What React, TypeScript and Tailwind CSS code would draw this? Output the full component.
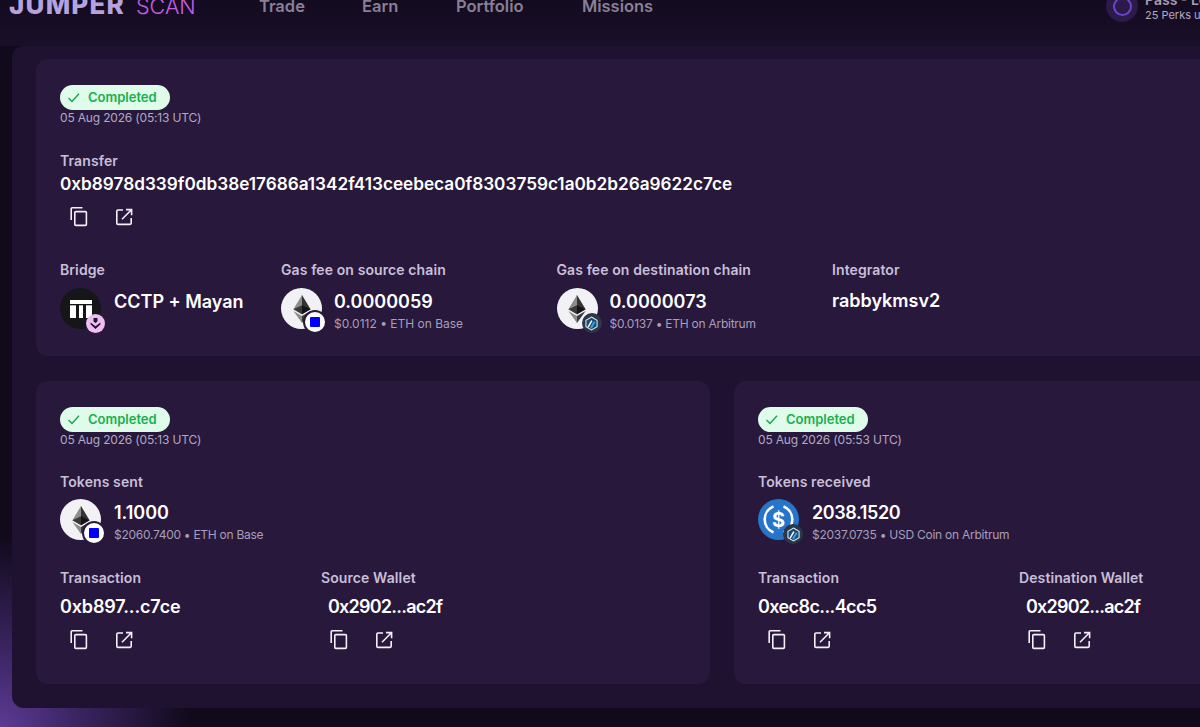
import React from 'react';

function CopyIcon() {
  return (
    <svg width="24" height="24" viewBox="0 0 24 24" fill="none" stroke="#f4f0f8" strokeWidth="1.6">
      <rect x="7.8" y="6.6" width="11.6" height="13.8" rx="1" />
      <path d="M15.5 2.8H5.2a1 1 0 0 0-1 1V15" />
    </svg>
  );
}

function OpenIcon() {
  return (
    <svg width="24" height="24" viewBox="0 0 24 24" fill="none" stroke="#f4f0f8" strokeWidth="1.6">
      <path d="M11 5H6a1.2 1.2 0 0 0-1.2 1.2v12A1.2 1.2 0 0 0 6 19.4h12a1.2 1.2 0 0 0 1.200-1.200V13" />
      <path d="M10 14.200 19.400 4.800M14 4.600h5.600v5.600" />
    </svg>
  );
}

function Actions() {
  return (
    <div className="flex gap-[21px] pl-[7px]">
      <button className="block w-6 h-6"><CopyIcon /></button>
      <button className="block w-6 h-6"><OpenIcon /></button>
    </div>
  );
}

function CheckBadge() {
  return (
    <div className="flex items-center w-[110px] h-[25px] rounded-full bg-[#dffbe9] pl-[7px] gap-[8px]">
      <svg width="13" height="13" viewBox="0 0 13 13" fill="none" stroke="#16a34a" strokeWidth="1.3">
        <path d="M1.500 7 5 10.500 12 2.800" />
      </svg>
      <span className="text-[13px] font-semibold text-[#17b04f] leading-none">Completed</span>
    </div>
  );
}

function EthLogo() {
  return (
    <div className="w-[41px] h-[41px] rounded-full bg-[#f2f2f6] flex items-center justify-center">
      <svg width="18" height="28" viewBox="0 0 256 417">
        <polygon fill="#343434" points="127.961,0 125.166,9.5 125.166,285.168 127.961,287.958 255.923,212.32" />
        <polygon fill="#8C8C8C" points="127.962,0 0,212.32 127.962,287.959 127.962,154.158" />
        <polygon fill="#3C3C3B" points="127.961,312.187 126.386,314.107 126.386,412.306 127.961,416.907 255.999,236.587" />
        <polygon fill="#8C8C8C" points="127.962,416.905 127.962,312.185 0,236.585" />
        <polygon fill="#141414" points="127.961,287.958 255.922,212.321 127.961,154.159" />
        <polygon fill="#393939" points="0,212.321 127.961,287.958 127.961,154.159" />
      </svg>
    </div>
  );
}

function UsdcLogo() {
  return (
    <svg width="41" height="41" viewBox="0 0 41 41">
      <circle cx="20.500" cy="20.500" r="20.500" fill="#2775ca" />
      <path d="M15.500 7.500a14 14 0 0 0 0 26M25.500 7.500a14 14 0 0 1 0 26" fill="none" stroke="#fff" strokeWidth="2.600" />
      <text x="20.500" y="27.500" textAnchor="middle" fill="#fff" fontSize="20" fontWeight="700" fontFamily="Inter, sans-serif">$</text>
    </svg>
  );
}

function BaseBadge() {
  return (
    <div className="absolute left-[24px] top-[24px] w-[20px] h-[20px] rounded-full bg-white ring-2 ring-[#27183c] flex items-center justify-center">
      <div className="w-[10px] h-[10px] rounded-[1px] bg-[#0000ff]" />
    </div>
  );
}

function ArbBadge() {
  return (
    <div className="absolute left-[25px] top-[25px] w-[20px] h-[20px] rounded-full bg-[#2b3648] flex items-center justify-center">
      <svg width="15" height="15" viewBox="0 0 14 14">
        <path d="M7 1 12.200 4v6L7 13 1.800 10V4z" fill="#1d4a72" stroke="#dbe7f2" strokeWidth="1" />
        <path d="M3.800 10.500 7.300 4.300" stroke="#fff" strokeWidth="1.400" />
        <path d="M6.500 11.200 9.900 5.300" stroke="#2ea5e6" strokeWidth="1.800" />
      </svg>
    </div>
  );
}

function BridgeLogo() {
  return (
    <div className="relative w-[41px] h-[41px]">
      <div className="w-[41px] h-[41px] rounded-full bg-[#161518] flex items-center justify-center">
        <svg width="22" height="18" viewBox="0 0 22 18" fill="#fff">
          <rect x="0" y="0" width="22" height="4" />
          <rect x="0" y="5.300" width="6" height="12.700" />
          <rect x="9" y="5.300" width="4" height="12.700" />
          <rect x="16" y="5.300" width="6" height="12.700" />
        </svg>
      </div>
      <div className="absolute left-[26px] top-[26px] w-[19px] h-[19px] rounded-full bg-[#efbdf3] flex items-center justify-center">
        <svg width="13" height="13" viewBox="0 0 12 12" fill="#22142f">
          <path d="M4.200 1h3.600v3.200L6 5.600 4.200 4.200z" />
          <path d="M1.500 5 6 8.500 10.500 5 10.500 7 6 11 1.500 7z" />
        </svg>
      </div>
    </div>
  );
}

function Label({ children, className = '' }: { children: React.ReactNode; className?: string }) {
  return <div className={`text-[14px] leading-[20px] font-semibold tracking-[0.1px] text-[#c9bfd8] ${className}`}>{children}</div>;
}

function TokenValue({ logo, badge, value, sub, valueClass = '', subClass = '' }: {
  logo: React.ReactNode; badge: React.ReactNode; value: string; sub: string; valueClass?: string; subClass?: string;
}) {
  return (
    <div className="flex gap-[12px] mt-[8px]">
      <div className="relative w-[41px] h-[41px]">
        {logo}
        {badge}
      </div>
      <div className="pt-px ml-px">
        <div className={`text-[18px] leading-[26px] font-semibold text-white ${valueClass}`}>{value}</div>
        <div className={`text-[12px] leading-[18px] text-[#a89fb8] ${subClass}`}>{sub}</div>
      </div>
    </div>
  );
}

function Status({ date }: { date: string }) {
  return (
    <>
      <CheckBadge />
      <div className="text-[12px] leading-[16px] tracking-[-0.17px] text-[#b3aac2]">{date}</div>
    </>
  );
}

function AddressColumn({ label, value, labelClass = '', valueClass = '' }: { label: string; value: string; labelClass?: string; valueClass?: string }) {
  return (
    <div>
      <Label className={labelClass}>{label}</Label>
      <div className={`text-[18px] leading-[26px] font-semibold text-white mt-[6px] ${valueClass}`}>{value}</div>
      <div className="mt-[8px]"><Actions /></div>
    </div>
  );
}

function SubCard({ date, title, token, left, right }: {
  date: string; title: string; token: React.ReactNode; left: React.ReactNode; right: React.ReactNode;
}) {
  return (
    <div className="w-[674px] h-[303px] rounded-[12px] bg-[#27183c] pt-[26px] pl-[24px]">
      <Status date={date} />
      <div className="mt-[24px]"><Label>{title}</Label></div>
      <div className="-mt-[1px]">{token}</div>
      <div className="grid grid-cols-[260px_260px] mt-[24px]">
        {left}
        {right}
      </div>
    </div>
  );
}

export default function App() {
  return (
    <div className="relative w-[1200px] h-[727px] overflow-hidden bg-[#110a1c] font-['Inter',sans-serif]">
      <div className="absolute inset-0 bg-[radial-gradient(circle_at_0px_727px,#5b3a94_0%,#3a2460_80px,#110a1c_190px)]" />
      <div className="relative w-[1460px]">
        <header className="h-[46px] overflow-hidden bg-gradient-to-b from-[#130b20] to-[#1a0f29]">
          <div className="flex items-center h-[14px] -mt-px">
            <div className="flex items-baseline w-[259px] pl-[9px]">
              <span className="text-[26px] leading-[14px] font-extrabold tracking-[1.200px] text-[#b6a2df] -translate-y-[1px]">JUMPER</span>
              <span className="text-[21.500px] leading-[14px] font-light ml-[11px] text-[#c75fe6] -translate-y-[1px]">SCAN</span>
            </div>
            <nav className="flex text-[16.500px] font-semibold text-[#8a7f95]">
              <span className="w-[103px]">Trade</span>
              <span className="w-[94px]">Earn</span>
              <span className="w-[126px]">Portfolio</span>
              <span className="w-[100px]">Missions</span>
            </nav>
            <div className="flex items-center ml-[424px] gap-[7px]">
              <div className="w-[32px] h-[32px] rounded-full bg-[#2c1a4a] flex items-center justify-center">
                <div className="w-[19px] h-[19px] rounded-full border-2 border-[#6d45c4]" />
              </div>
              <div className="pt-[1px]">
                <div className="text-[14px] leading-[16px] font-semibold text-[#a79db5]">Pass - Level 1</div>
                <div className="text-[11px] leading-[14px] text-[#b3aac2]">25 Perks unlocked</div>
              </div>
            </div>
          </div>
        </header>
        <main className="ml-[12px] w-[1420px] h-[662px] rounded-[12px] bg-[#1f1130] px-[24px] pt-[13px]">
          <section className="h-[297px] rounded-[12px] bg-[#27183c] pt-[26px] pl-[24px]">
            <Status date="05 Aug 2026 (05:13 UTC)" />
            <div className="mt-[25px]"><Label>Transfer</Label></div>
            <div className="text-[17.200px] leading-[26px] font-semibold text-white">0xb8978d339f0db38e17686a1342f413ceebeca0f8303759c1a0b2b26a9622c7ce</div>
            <div className="mt-[8px]"><Actions /></div>
            <div className="grid grid-cols-[221px_275.500px_275.500px_200px] mt-[31px]">
              <div>
                <Label>Bridge</Label>
                <div className="flex gap-[13px] mt-[8px]">
                  <BridgeLogo />
                  <div className="text-[18px] leading-[26px] font-semibold text-white pt-px">CCTP + Mayan</div>
                </div>
              </div>
              <div>
                <Label>Gas fee on source chain</Label>
                <TokenValue logo={<EthLogo />} badge={<BaseBadge />} value="0.0000059" sub="$0.0112 • ETH on Base" valueClass="-ml-px" subClass="-ml-px" />
              </div>
              <div>
                <Label>Gas fee on destination chain</Label>
                <TokenValue logo={<EthLogo />} badge={<ArbBadge />} value="0.0000073" sub="$0.0137 • ETH on Arbitrum" valueClass="-ml-px" subClass="-ml-px tracking-[-0.25px]" />
              </div>
              <div>
                <Label>Integrator</Label>
                <div className="text-[18px] leading-[26px] font-semibold text-white mt-[8px]">rabbykmsv2</div>
              </div>
            </div>
          </section>
          <div className="flex gap-[24px] mt-[25px]">
            <SubCard date="05 Aug 2026 (05:13 UTC)" title="Tokens sent"
              token={<TokenValue logo={<EthLogo />} badge={<BaseBadge />} value="1.1000" sub="$2060.7400 • ETH on Base" subClass="tracking-[-0.28px]" />}
              left={<AddressColumn label="Transaction" value="0xb897...c7ce" valueClass="tracking-[-0.15px]" />}
              right={<AddressColumn label="Source Wallet" labelClass="pl-px" value="0x2902...ac2f" valueClass="pl-[8px] tracking-[-0.77px]" />} />
            <SubCard date="05 Aug 2026 (05:53 UTC)" title="Tokens received"
              token={<TokenValue logo={<UsdcLogo />} badge={<ArbBadge />} value="2038.1520" sub="$2037.0735 • USD Coin on Arbitrum" valueClass="tracking-[-0.4px]" subClass="tracking-[-0.25px]" />}
              left={<AddressColumn label="Transaction" value="0xec8c...4cc5" valueClass="tracking-[-0.6px]" />}
              right={<AddressColumn label="Destination Wallet" labelClass="pl-px" value="0x2902...ac2f" valueClass="pl-[8px] tracking-[-0.77px]" />} />
          </div>
        </main>
      </div>
    </div>
  );
}
